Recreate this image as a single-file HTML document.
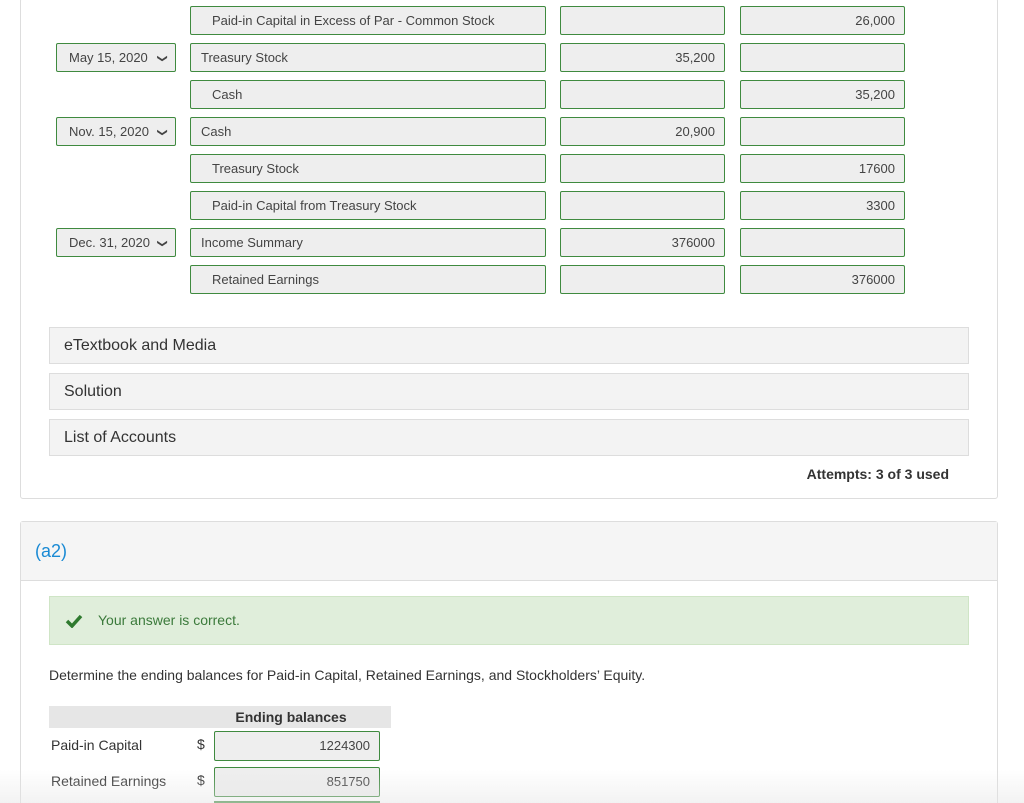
<!DOCTYPE html><html style="height:803px;overflow:hidden"><head><style>
body{margin:0;width:1024px;height:803px;overflow:hidden;background:#fff;font-family:"Liberation Sans",sans-serif;position:relative;color:#333}
.a{position:absolute;box-sizing:border-box}
.b{border:1px solid #3f8a3f;background:#eee;border-radius:2px;height:29px;font-size:13px;line-height:27px;color:#444}
.r{text-align:right;padding-right:9px}
.ch{position:absolute;right:9px;top:1px;font-size:10px;display:inline-block;transform:rotate(90deg)}
.acc{position:absolute;left:49px;width:920px;height:37px;border:1px solid #ddd;background:#f3f3f3;font-size:16px;line-height:35px;padding-left:14px;box-sizing:border-box;color:#333}
</style></head><body>
<div class="a" style="left:20px;top:-2px;width:978px;height:501px;border:1px solid #ddd;border-radius:3px"></div>
<div class="a b" style="left:190px;top:6px;width:356px;padding-left:21px">Paid-in Capital in Excess of Par - Common Stock</div>
<div class="a b" style="left:560px;top:6px;width:165px"></div>
<div class="a b r" style="left:740px;top:6px;width:165px">26,000</div>

<div class="a b" style="left:56px;top:43px;width:120px;padding-left:12px">May 15, 2020<span class="ch">&#10095;</span></div>
<div class="a b" style="left:190px;top:43px;width:356px;padding-left:10px">Treasury Stock</div>
<div class="a b r" style="left:560px;top:43px;width:165px">35,200</div>
<div class="a b" style="left:740px;top:43px;width:165px"></div>

<div class="a b" style="left:190px;top:80px;width:356px;padding-left:21px">Cash</div>
<div class="a b" style="left:560px;top:80px;width:165px"></div>
<div class="a b r" style="left:740px;top:80px;width:165px">35,200</div>

<div class="a b" style="left:56px;top:117px;width:120px;padding-left:12px">Nov. 15, 2020<span class="ch">&#10095;</span></div>
<div class="a b" style="left:190px;top:117px;width:356px;padding-left:10px">Cash</div>
<div class="a b r" style="left:560px;top:117px;width:165px">20,900</div>
<div class="a b" style="left:740px;top:117px;width:165px"></div>

<div class="a b" style="left:190px;top:154px;width:356px;padding-left:21px">Treasury Stock</div>
<div class="a b" style="left:560px;top:154px;width:165px"></div>
<div class="a b r" style="left:740px;top:154px;width:165px">17600</div>

<div class="a b" style="left:190px;top:191px;width:356px;padding-left:21px">Paid-in Capital from Treasury Stock</div>
<div class="a b" style="left:560px;top:191px;width:165px"></div>
<div class="a b r" style="left:740px;top:191px;width:165px">3300</div>

<div class="a b" style="left:56px;top:228px;width:120px;padding-left:12px">Dec. 31, 2020<span class="ch">&#10095;</span></div>
<div class="a b" style="left:190px;top:228px;width:356px;padding-left:10px">Income Summary</div>
<div class="a b r" style="left:560px;top:228px;width:165px">376000</div>
<div class="a b" style="left:740px;top:228px;width:165px"></div>

<div class="a b" style="left:190px;top:265px;width:356px;padding-left:21px">Retained Earnings</div>
<div class="a b" style="left:560px;top:265px;width:165px"></div>
<div class="a b r" style="left:740px;top:265px;width:165px">376000</div>

<div class="acc" style="top:327px">eTextbook and Media</div>
<div class="acc" style="top:373px">Solution</div>
<div class="acc" style="top:419px">List of Accounts</div>
<div class="a" style="left:700px;top:466px;width:249px;text-align:right;font-size:14px;font-weight:bold;color:#333">Attempts: 3 of 3 used</div>

<div class="a" style="left:20px;top:521px;width:978px;height:290px;border:1px solid #ddd;border-radius:3px"></div>
<div class="a" style="left:21px;top:522px;width:976px;height:59px;background:#f5f5f5;border-bottom:1px solid #ddd;font-size:18px;line-height:59px;padding-left:14px;color:#1a8ad4">(a2)</div>
<div class="a" style="left:49px;top:596px;width:920px;height:49px;background:#e0eedb;border:1px solid #cfe5c6;font-size:14px;line-height:47px;color:#3b7a3b;padding-left:48px">
<svg style="position:absolute;left:15px;top:17px" width="18" height="14" viewBox="0 0 18 14"><path d="M2 7l5 5 9-10" stroke="#2f7a2f" stroke-width="3.5" fill="none"/></svg>Your answer is correct.</div>
<div class="a" style="left:49px;top:667px;font-size:14px;color:#333">Determine the ending balances for Paid-in Capital, Retained Earnings, and Stockholders’ Equity.</div>
<div class="a" style="left:49px;top:706px;width:342px;height:22px;background:#e6e6e6;font-size:14px;font-weight:bold;line-height:22px;text-align:center;padding-left:142px">Ending balances</div>
<div class="a" style="left:51px;top:737px;font-size:14px">Paid-in Capital</div>
<div class="a" style="left:197px;top:736px;font-size:14px">$</div>
<div class="a b r" style="left:214px;top:731px;width:166px;height:30px;line-height:28px">1224300</div>
<div class="a" style="left:51px;top:773px;font-size:14px">Retained Earnings</div>
<div class="a" style="left:197px;top:772px;font-size:14px">$</div>
<div class="a b r" style="left:214px;top:767px;width:166px;height:30px;line-height:28px">851750</div>
<div class="a" style="left:214px;top:801px;width:166px;height:2px;background:#3f8a3f"></div>
<div class="a" style="left:0;top:770px;width:1024px;height:33px;background:linear-gradient(rgba(255,255,255,0),rgba(230,230,230,0.5))"></div>
</body></html>
